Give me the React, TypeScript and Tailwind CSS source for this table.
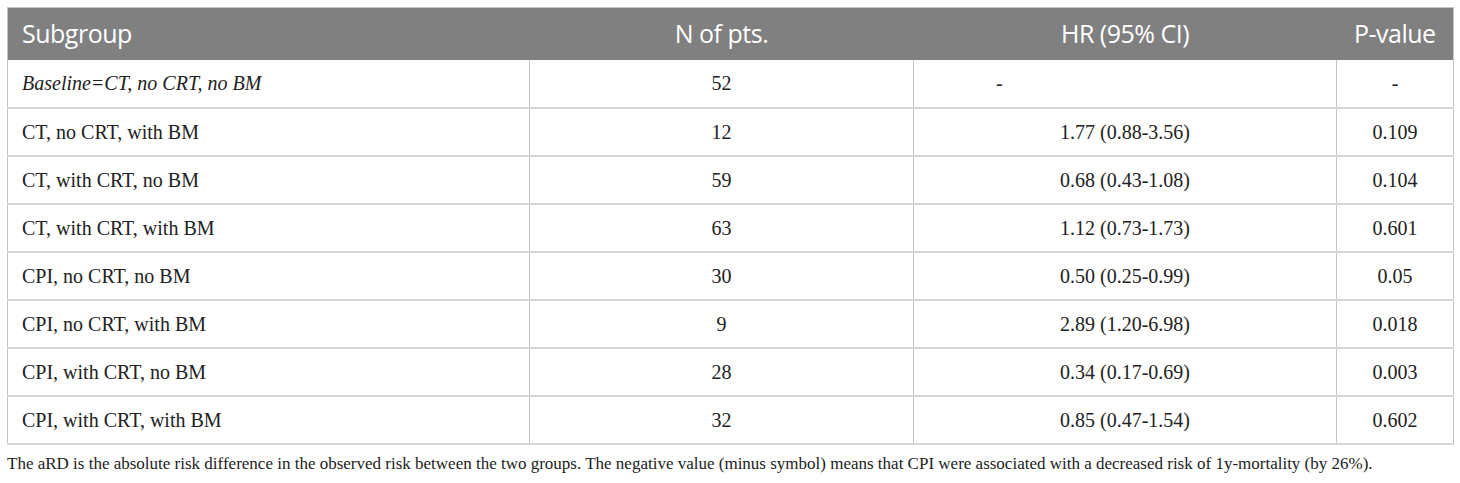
const rows = [
  { group: "Baseline=CT, no CRT, no BM", n: "52", hr: "-", p: "-", base: true },
  { group: "CT, no CRT, with BM", n: "12", hr: "1.77 (0.88-3.56)", p: "0.109" },
  { group: "CT, with CRT, no BM", n: "59", hr: "0.68 (0.43-1.08)", p: "0.104" },
  { group: "CT, with CRT, with BM", n: "63", hr: "1.12 (0.73-1.73)", p: "0.601" },
  { group: "CPI, no CRT, no BM", n: "30", hr: "0.50 (0.25-0.99)", p: "0.05" },
  { group: "CPI, no CRT, with BM", n: "9", hr: "2.89 (1.20-6.98)", p: "0.018" },
  { group: "CPI, with CRT, no BM", n: "28", hr: "0.34 (0.17-0.69)", p: "0.003" },
  { group: "CPI, with CRT, with BM", n: "32", hr: "0.85 (0.47-1.54)", p: "0.602" },
];

export default function App() {
  return (
    <div className="w-[1460px] h-[483px] bg-white pt-[7px] px-[7px]">
      <table className="w-[1446px] table-fixed border-collapse border border-[#c4c4c4]">
        <colgroup>
          <col className="w-[522px]" />
          <col className="w-[384px]" />
          <col className="w-[423px]" />
          <col className="w-[117px]" />
        </colgroup>
        <thead>
          <tr className="h-[52px] bg-[#808080] text-white font-['Open_Sans',sans-serif] text-[25px] tracking-[-0.5px]">
            <th className="font-normal text-left pl-[14px]">Subgroup</th>
            <th className="font-normal text-center">N of pts.</th>
            <th className="font-normal text-center">HR (95% CI)</th>
            <th className="font-normal text-center whitespace-nowrap">P-value</th>
          </tr>
        </thead>
        <tbody className="font-['Liberation_Serif',serif] text-[20px] text-[#222]">
          {rows.map((r) => (
            <tr key={r.group} className="h-[48px] border-b-2 border-[#d6d6d6]">
              <td className={`pl-[14px] border-r border-[#c4c4c4] ${r.base ? "italic" : ""}`}>{r.group}</td>
              <td className="text-center border-r border-[#c4c4c4]">{r.n}</td>
              {r.base ? (
                <td className="text-left pl-[82px] border-r border-[#c4c4c4]">{r.hr}</td>
              ) : (
                <td className="text-center border-r border-[#c4c4c4]">{r.hr}</td>
              )}
              <td className="text-center">{r.p}</td>
            </tr>
          ))}
        </tbody>
      </table>
      <p className="mt-[6px] font-['Liberation_Serif',serif] text-[17px] text-[#222]">
        The aRD is the absolute risk difference in the observed risk between the two groups. The negative value (minus symbol) means that CPI were associated with a decreased risk of 1y-mortality (by 26%).
      </p>
    </div>
  );
}
